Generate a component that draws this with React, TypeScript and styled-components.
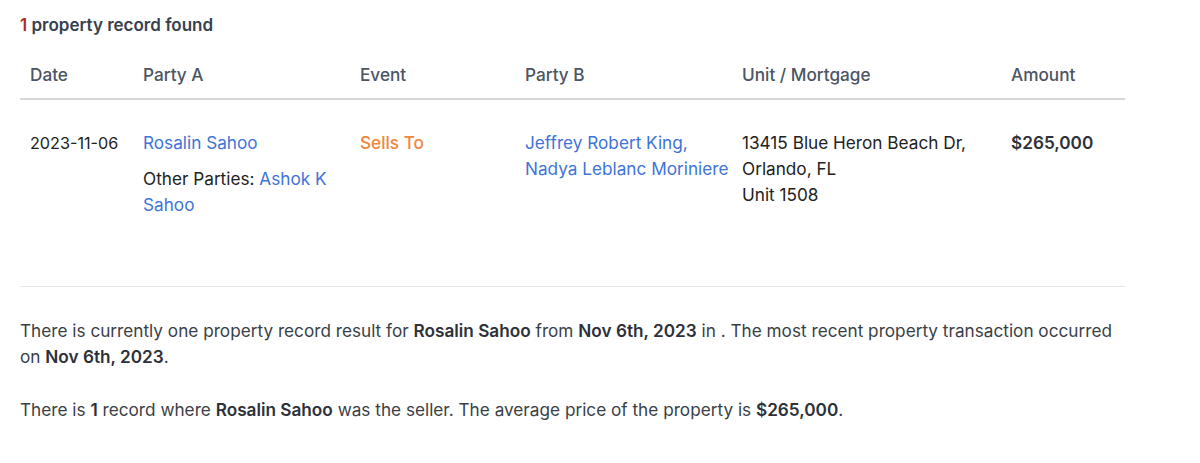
import React from "react";
import styled, { createGlobalStyle } from "styled-components";

const Global = createGlobalStyle`
  html, body { margin: 0; padding: 0; background: #fff; }
  body { font-family: Inter, "Noto Sans", sans-serif; color: #374151; -webkit-font-smoothing: antialiased; }
`;

const Page = styled.div`
  width: 1105px;
  padding: 13px 0 0 20px;
`;

const Title = styled.h2`
  margin: 0;
  font-size: 17px;
  line-height: 24px;
  font-weight: 600;
  color: #374151;
`;

const Count = styled.span`
  color: #b02a2a;
`;

const cols = "113px 217px 165px 217px 269px 124px";

const HeaderRow = styled.div`
  display: grid;
  grid-template-columns: ${cols};
  margin-top: 13px;
  padding: 13px 0 11px;
  border-bottom: 2px solid #d4d6da;
`;

const HeadCell = styled.div`
  padding-left: 10px;
  font-size: 17.2px;
  line-height: 24px;
  font-weight: 500;
  color: #4b5563;
`;

const BodyRow = styled.div`
  display: grid;
  grid-template-columns: ${cols};
  padding: 30px 0 68px;
  border-bottom: 1px solid #e5e7eb;
`;

const Cell = styled.div<{ $bold?: boolean; $tone?: "orange"; $small?: boolean }>`
  padding-left: 10px;
  padding-right: 2px;
  font-size: ${(p) => (p.$small ? "16.2px" : "17.2px")};
  line-height: 26px;
  font-weight: ${(p) => (p.$bold ? 600 : p.$tone ? 500 : 400)};
  color: ${(p) => (p.$tone === "orange" ? "#ee8739" : p.$bold ? "#2d3139" : "#222")};
`;

const Link = styled.a`
  color: #3f74d8;
  text-decoration: none;
`;

const Others = styled.div`
  margin-top: 10px;
  color: #222;
`;

const Para = styled.p<{ $first?: boolean }>`
  margin: ${(p) => (p.$first ? "31px" : "27px")} 0 0;
  font-size: 17.2px;
  line-height: 26px;
  color: #3a3f47;
  b { font-weight: 600; color: #2d3139; }
`;

export default function App() {
  return (
    <>
      <Global />
      <Page>
        <Title>
          <Count>1</Count> property record found
        </Title>
        <HeaderRow>
          <HeadCell>Date</HeadCell>
          <HeadCell>Party A</HeadCell>
          <HeadCell>Event</HeadCell>
          <HeadCell>Party B</HeadCell>
          <HeadCell>Unit / Mortgage</HeadCell>
          <HeadCell>Amount</HeadCell>
        </HeaderRow>
        <BodyRow>
          <Cell $small>2023-11-06</Cell>
          <Cell>
            <Link href="#">Rosalin Sahoo</Link>
            <Others>
              Other Parties: <Link href="#">Ashok K Sahoo</Link>
            </Others>
          </Cell>
          <Cell $tone="orange">Sells To</Cell>
          <Cell>
            <Link href="#">Jeffrey Robert King,</Link>
            <br />
            <Link href="#">Nadya Leblanc Moriniere</Link>
          </Cell>
          <Cell>
            13415 Blue Heron Beach Dr,
            <br />
            Orlando, FL
            <br />
            Unit 1508
          </Cell>
          <Cell $bold>$265,000</Cell>
        </BodyRow>
        <Para $first>
          There is currently one property record result for <b>Rosalin Sahoo</b> from{" "}
          <b>Nov 6th, 2023</b> in . The most recent property transaction occurred on{" "}
          <b>Nov 6th, 2023</b>.
        </Para>
        <Para>
          There is <b>1</b> record where <b>Rosalin Sahoo</b> was the seller. The average price of
          the property is <b>$265,000</b>.
        </Para>
      </Page>
    </>
  );
}
